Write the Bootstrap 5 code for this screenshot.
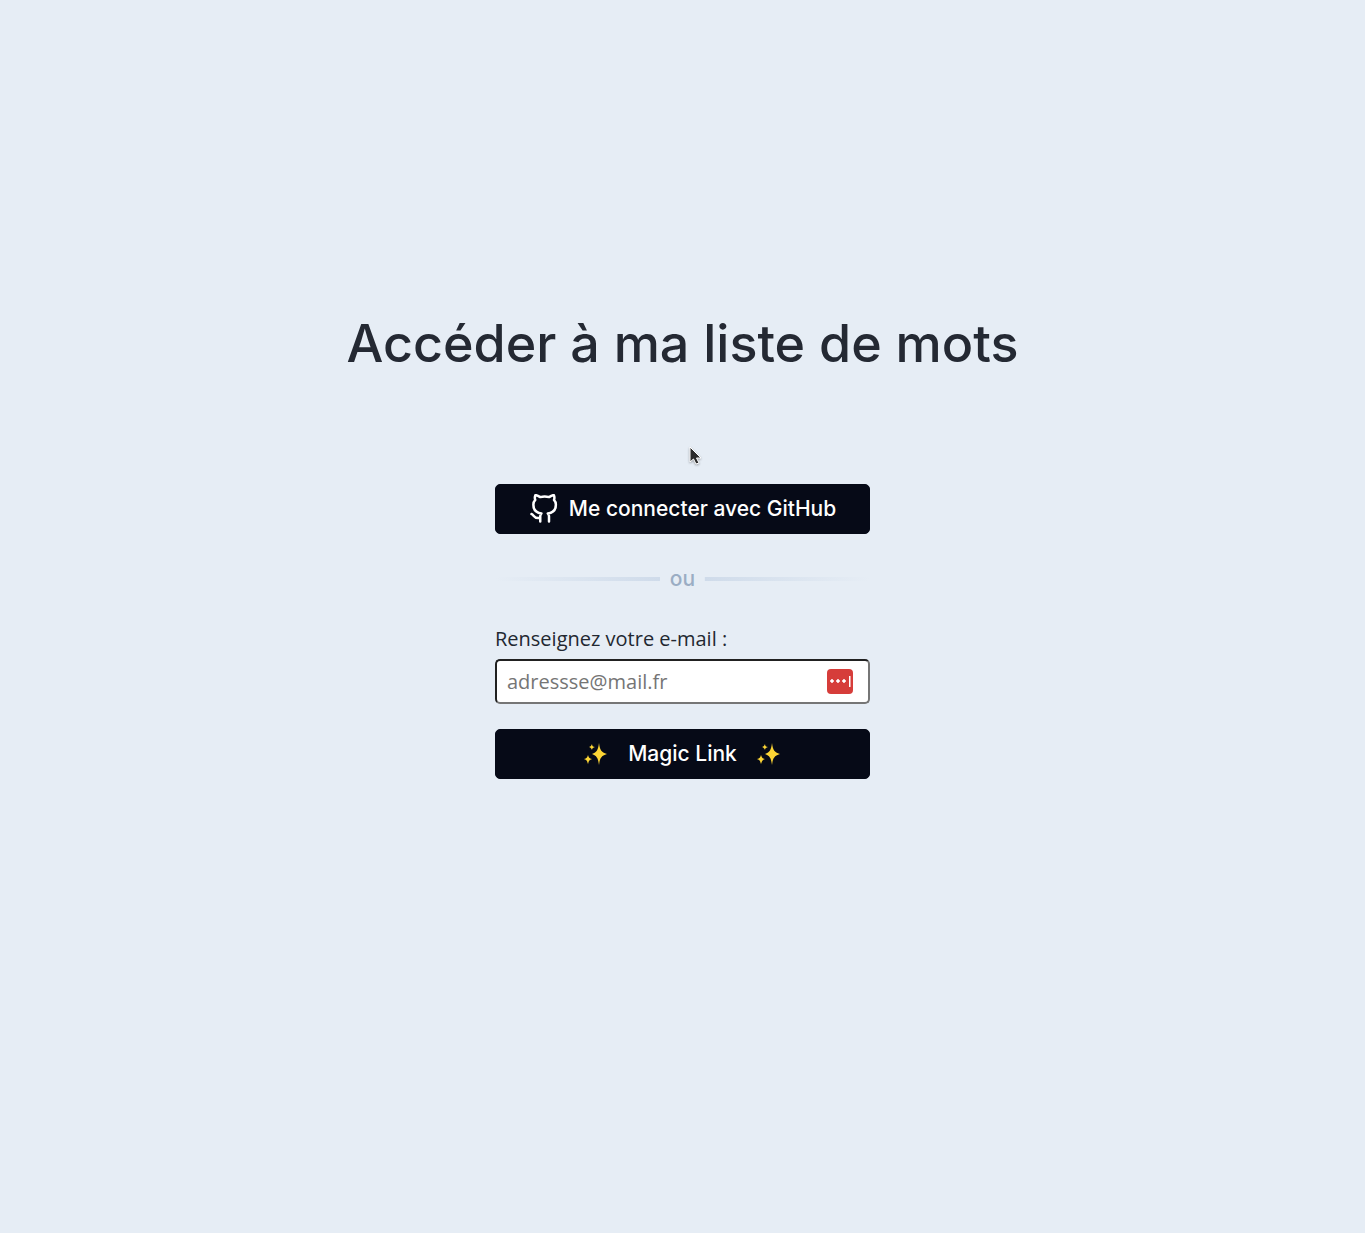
<!DOCTYPE html>
<html lang="fr">
<head>
<meta charset="utf-8">
<meta name="viewport" content="width=device-width, initial-scale=1">
<title>Accéder à ma liste de mots</title>
<link href="https://cdn.jsdelivr.net/npm/bootstrap@5.3.0/dist/css/bootstrap.min.css" rel="stylesheet">
<style>
  body { background: #e6edf5; color: #222831; font-family: "Open Sans", sans-serif; font-size: 20px; line-height: 30px; }
  .login { padding-top: 315px; }
  .login-title { font: 500 52px/58px Inter, sans-serif; color: #242933; margin-bottom: 111px; }
  .login-panel { width: 100%; max-width: 375px; }
  .btn-dark-wide { --bs-btn-color: #fff; --bs-btn-bg: #060a17; --bs-btn-border-color: #060a17; --bs-btn-hover-color: #fff; --bs-btn-hover-bg: #151a2c; --bs-btn-border-radius: 5px; gap: 10px; height: 50px; padding: 0; font: 500 21px/24px Inter, sans-serif; }
  .btn-dark-wide.magic { gap: 20px; margin-top: 25px; }
  .separator { margin: 30px 0; gap: 10px; color: #9badc4; font: 500 21px/30px Inter, sans-serif; }
  .separator::before, .separator::after { content: ""; flex: 1; height: 4px; background: linear-gradient(to right, transparent, #cfdbea); }
  .separator::after { transform: scaleX(-1); }
  .mail-row { margin-top: 5px; }
  .mail-input { height: 45px; padding: 0 50px 0 10px; border: 2px inset #767676; border-radius: 5px; font-size: 20px; color: #222831; }
  .mail-input::placeholder { color: #757575; opacity: 1; }
  .vault { right: 17px; top: 9px; width: 26px; height: 26px; }
  .pointer { left: 50%; top: 444px; margin-left: 4px; filter: drop-shadow(0 1px 1px #0005); }
</style>
</head>
<body>
<main class="login container d-flex flex-column align-items-center">
  <h1 class="login-title text-center">Accéder à ma liste de mots</h1>
  <div class="login-panel">
    <button type="button" class="btn btn-dark-wide w-100 d-flex align-items-center justify-content-center">
      <svg width="30" height="30" viewBox="0 0 24 24" fill="none" stroke="currentColor" stroke-width="2" stroke-linecap="round" stroke-linejoin="round" aria-hidden="true"><path d="M9 19c-5 1.500-5-2.500-7-3m14 6v-3.870a3.370 3.370 0 0 0-.940-2.610c3.140-.350 6.440-1.540 6.440-7A5.440 5.440 0 0 0 20 4.770 5.070 5.070 0 0 0 19.910 1S18.730.650 16 2.480a13.380 13.380 0 0 0-7 0C6.270.650 5.090 1 5.090 1A5.070 5.070 0 0 0 5 4.770a5.440 5.440 0 0 0-1.500 3.780c0 5.420 3.300 6.610 6.440 7A3.370 3.370 0 0 0 9 18.130V22"/></svg>
      <span>Me connecter avec GitHub</span>
    </button>
    <div class="separator d-flex align-items-center"><span>ou</span></div>
    <form>
      <label for="mail" class="d-block">Renseignez votre e-mail :</label>
      <div class="position-relative mail-row">
        <input id="mail" type="email" class="mail-input w-100 d-block bg-white" placeholder="adressse@mail.fr">
        <svg class="vault position-absolute" viewBox="0 0 26 26" aria-hidden="true"><rect y="1" width="26" height="25" rx="4" fill="#d63d3a"/><g fill="#fff"><path d="M5 11l2 2-2 2-2-2ZM11 11l2 2-2 2-2-2ZM17 11l2 2-2 2-2-2Z" stroke="#fff" stroke-width=".5" stroke-linejoin="round"/><rect x="22" y="8" width="1.500" height="11"/></g></svg>
      </div>
      <button type="submit" class="btn btn-dark-wide magic w-100 d-flex align-items-center justify-content-center">
        <svg width="24" height="24" viewBox="0 0 24 24" fill="#fcd535" aria-hidden="true"><path id="spark" d="M15 1C16 8 17 10 23 12C17 14 16 16 15 23C14 16 13 14 8 12C13 10 14 8 15 1ZM4 13C5 16 5 16 8 17C5 18 5 19 4 22C3 19 3 18 0 17C3 16 3 16 4 13ZM8 2C8 4 9 5 11 5C9 6 8 6 8 8C7 6 7 6 5 5C7 4 7 4 8 2Z"/></svg>
        <span>Magic Link</span>
        <svg width="24" height="24" viewBox="0 0 24 24" fill="#fcd535" aria-hidden="true"><use href="#spark"/></svg>
      </button>
    </form>
  </div>
</main>
<svg class="pointer position-absolute" width="16" height="24" viewBox="0 0 16 24" aria-hidden="true"><path d="M3 3V18L6.500 15L9 20L12 19L9.500 14H14Z" fill="#2b2b2b" stroke="#fff"/></svg>
<script src="https://cdn.jsdelivr.net/npm/bootstrap@5.3.0/dist/js/bootstrap.bundle.min.js"></script>
</body>
</html>
